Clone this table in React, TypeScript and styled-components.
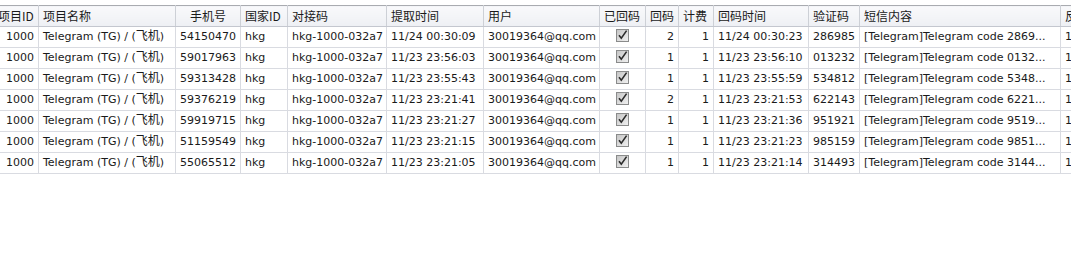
import styled, { createGlobalStyle } from "styled-components";

const GlobalStyle = createGlobalStyle`
  html, body {
    margin: 0;
    padding: 0;
    background: #ffffff;
  }
  body {
    font-family: "DejaVu Sans", "Noto Sans CJK SC", sans-serif;
    font-size: 11px;
    color: #1a1a1a;
  }
`;

type Align = "left" | "right" | "center";

interface Column {
  title: string;
  width: number;
  align: Align;
  headAlign?: Align;
}

const columns: Column[] = [
  { title: "项目ID", width: 45, align: "right" },
  { title: "项目名称", width: 137, align: "left" },
  { title: "手机号", width: 65, align: "left", headAlign: "center" },
  { title: "国家ID", width: 47, align: "left" },
  { title: "对接码", width: 99, align: "left" },
  { title: "提取时间", width: 97, align: "left" },
  { title: "用户", width: 116, align: "left" },
  { title: "已回码", width: 46, align: "center" },
  { title: "回码", width: 33, align: "right" },
  { title: "计费", width: 35, align: "right" },
  { title: "回码时间", width: 95, align: "left" },
  { title: "验证码", width: 51, align: "left" },
  { title: "短信内容", width: 201, align: "left" },
  { title: "反馈", width: 60, align: "left" },
];

const rows = [
  ["54150470", "11/24 00:30:09", "2", "11/24 00:30:23", "286985", "2869"],
  ["59017963", "11/23 23:56:03", "1", "11/23 23:56:10", "013232", "0132"],
  ["59313428", "11/23 23:55:43", "1", "11/23 23:55:59", "534812", "5348"],
  ["59376219", "11/23 23:21:41", "2", "11/23 23:21:53", "622143", "6221"],
  ["59919715", "11/23 23:21:27", "1", "11/23 23:21:36", "951921", "9519"],
  ["51159549", "11/23 23:21:15", "1", "11/23 23:21:23", "985159", "9851"],
  ["55065512", "11/23 23:21:05", "1", "11/23 23:21:14", "314493", "3144"],
];

const Viewport = styled.div`
  width: 1071px;
  height: 270px;
  overflow: hidden;
  padding-top: 5px;
  box-sizing: border-box;
`;

const Grid = styled.table`
  border-collapse: collapse;
  table-layout: fixed;
  margin-left: -7px;
  width: ${columns.reduce((s, c) => s + c.width, 0)}px;
`;

const HeadCell = styled.th<{ $align: Align }>`
  height: 20px;
  padding: 0 4px;
  font-family: "Noto Sans CJK SC", "DejaVu Sans", sans-serif;
  font-size: 12px;
  line-height: 20px;
  font-weight: normal;
  text-align: ${(p) => p.$align};
  white-space: nowrap;
  overflow: hidden;
  color: #1a1a1a;
  background: linear-gradient(#f9f9fb, #eef0f4);
  border-top: 1px solid #a9abb0;
  border-bottom: 1px solid #c4c7cf;
  border-right: 1px solid #cdd0d6;
  border-left: 1px solid #cdd0d6;
`;

const Cell = styled.td<{ $align: Align }>`
  height: 20px;
  padding: 0 4px;
  text-align: ${(p) => p.$align};
  white-space: nowrap;
  overflow: hidden;
  border: 1px solid #d9dbe1;
  line-height: 20px;
`;

const Han = styled.span`
  font-family: "Noto Sans CJK SC", sans-serif;
  font-size: 12px;
  line-height: 1;
`;

const CheckBox = () => (
  <svg width="13" height="13" viewBox="0 0 13 13" style={{ verticalAlign: "-2px" }}>
    <defs>
      <linearGradient id="cbg" x1="0" y1="0" x2="1" y2="1">
        <stop offset="0" stopColor="#c4c4c4" />
        <stop offset="1" stopColor="#f2f2f2" />
      </linearGradient>
    </defs>
    <rect x="0.5" y="0.5" width="12" height="12" fill="url(#cbg)" stroke="#8a8b8b" />
    <path d="M3 6.2 L5.3 9.2 L10.6 1.6" fill="none" stroke="#2b2b2b" strokeWidth="1.6" />
  </svg>
);

const projectName = (
  <>
    Telegram (TG) / (<Han>飞机</Han>)
  </>
);

export default function App() {
  return (
    <>
      <GlobalStyle />
      <Viewport>
        <Grid>
          <colgroup>
            {columns.map((c) => (
              <col key={c.title} style={{ width: c.width }} />
            ))}
          </colgroup>
          <thead>
            <tr>
              {columns.map((c) => (
                <HeadCell key={c.title} $align={c.headAlign ?? "left"}>
                  {c.title}
                </HeadCell>
              ))}
            </tr>
          </thead>
          <tbody>
            {rows.map(([phone, taken, count, backAt, code, sms]) => {
              const values = [
                "1000",
                projectName,
                phone,
                "hkg",
                "hkg-1000-032a7",
                taken,
                "30019364@qq.com",
                null,
                count,
                "1",
                backAt,
                code,
                `[Telegram]Telegram code ${sms}...`,
                "1",
              ];
              return (
                <tr key={phone}>
                  {values.map((v, i) => (
                    <Cell key={i} $align={columns[i].align}>
                      {v === null ? <CheckBox /> : v}
                    </Cell>
                  ))}
                </tr>
              );
            })}
          </tbody>
        </Grid>
      </Viewport>
    </>
  );
}
